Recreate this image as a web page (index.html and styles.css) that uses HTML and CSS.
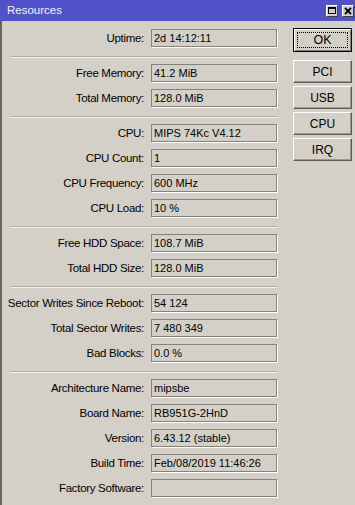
FILE: index.html
```html
<!DOCTYPE html>
<html>
<head>
<meta charset="utf-8">
<link rel="stylesheet" href="styles.css">
</head>
<body>
<div class="window">
  <div class="titlebar">
    <span class="title">Resources</span>
    <div class="tb-btns">
      <span class="tb-btn"><span class="max-icon"></span></span>
      <span class="tb-btn">
        <svg width="8" height="8" viewBox="0 0 8 8"><path d="M1 1 L7 7 M7 1 L1 7" stroke="#000" stroke-width="2" fill="none"/></svg>
      </span>
    </div>
  </div>
  <div class="content">
    <div class="form">
      <div class="row"><span class="lbl">Uptime:</span><span class="field">2d 14:12:11</span></div>
      <div class="sep"></div>
      <div class="row"><span class="lbl">Free Memory:</span><span class="field">41.2 MiB</span></div>
      <div class="row"><span class="lbl">Total Memory:</span><span class="field">128.0 MiB</span></div>
      <div class="sep"></div>
      <div class="row"><span class="lbl">CPU:</span><span class="field">MIPS 74Kc V4.12</span></div>
      <div class="row"><span class="lbl">CPU Count:</span><span class="field">1</span></div>
      <div class="row"><span class="lbl">CPU Frequency:</span><span class="field">600 MHz</span></div>
      <div class="row"><span class="lbl">CPU Load:</span><span class="field">10 %</span></div>
      <div class="sep"></div>
      <div class="row"><span class="lbl">Free HDD Space:</span><span class="field">108.7 MiB</span></div>
      <div class="row"><span class="lbl">Total HDD Size:</span><span class="field">128.0 MiB</span></div>
      <div class="sep"></div>
      <div class="row"><span class="lbl">Sector Writes Since Reboot:</span><span class="field">54 124</span></div>
      <div class="row"><span class="lbl">Total Sector Writes:</span><span class="field">7 480 349</span></div>
      <div class="row"><span class="lbl">Bad Blocks:</span><span class="field">0.0 %</span></div>
      <div class="sep"></div>
      <div class="row"><span class="lbl">Architecture Name:</span><span class="field">mipsbe</span></div>
      <div class="row"><span class="lbl">Board Name:</span><span class="field">RB951G-2HnD</span></div>
      <div class="row"><span class="lbl">Version:</span><span class="field">6.43.12 (stable)</span></div>
      <div class="row"><span class="lbl">Build Time:</span><span class="field">Feb/08/2019 11:46:26</span></div>
      <div class="row"><span class="lbl">Factory Software:</span><span class="field"></span></div>
    </div>
    <div class="buttons">
      <button class="btn btn-default"><span class="focus">OK</span></button>
      <div class="btn-group">
        <button class="btn">PCI</button>
        <button class="btn">USB</button>
        <button class="btn">CPU</button>
        <button class="btn">IRQ</button>
      </div>
    </div>
  </div>
</div>
</body>
</html>
```

FILE: styles.css
```css
html, body {
  margin: 0;
  padding: 0;
  background: #d4d0c8;
}

.window {
  width: 355px;
  height: 505px;
  background: #d4d0c8;
  font-family: "Liberation Sans", Arial, sans-serif;
  font-size: 11px;
  color: #000;
  overflow: hidden;
  display: flex;
  flex-direction: column;
}

.titlebar {
  height: 21px;
  background: #5151c9;
  display: flex;
  align-items: center;
  justify-content: space-between;
  padding: 0 1px 0 7px;
  flex: none;
}

.title {
  color: #f2f2fa;
  font-size: 11.5px;
  line-height: 21px;
}

.tb-btns {
  display: flex;
  gap: 4px;
}

.tb-btn {
  width: 12px;
  height: 12px;
  box-sizing: border-box;
  background: #d4d0c8;
  border: 1px solid;
  border-color: #fff #404040 #404040 #fff;
  display: flex;
  align-items: center;
  justify-content: center;
}

.max-icon {
  width: 8px;
  height: 7px;
  box-sizing: border-box;
  border: 1px solid #000;
  border-top-width: 2px;
}

.content {
  flex: 1;
  display: flex;
  border-left: 2px solid #6a6761;
}

.form {
  width: 275px;
  padding-top: 8px;
  display: flex;
  flex-direction: column;
}

.row {
  display: flex;
  align-items: center;
  height: 18px;
}

.row + .row {
  margin-top: 7px;
}

.lbl {
  width: 149px;
  padding-right: 7px;
  box-sizing: border-box;
  text-align: right;
  white-space: nowrap;
  font-size: 11.5px;
  letter-spacing: -0.3px;
  flex: none;
}

.field {
  width: 126px;
  height: 18px;
  box-sizing: border-box;
  border: 1px solid #858279;
  box-shadow: 1px 1px 0 #fff;
  padding-left: 2px;
  line-height: 16px;
  white-space: nowrap;
  flex: none;
}

.sep {
  margin: 9px 0 6px 8px;
  width: 267px;
  border-top: 1px solid #aeaaa3;
  border-bottom: 1px solid #f4f3f0;
}

.buttons {
  margin-left: 16px;
  padding-top: 7px;
  display: flex;
  flex-direction: column;
}

.btn {
  width: 59px;
  height: 23px;
  box-sizing: border-box;
  background: #d4d0c8;
  font-family: inherit;
  font-size: 12px;
  color: #000;
  padding: 0;
  margin: 0;
  border: 1px solid;
  border-color: #fff #5c5a56 #5c5a56 #fff;
  box-shadow: inset -1px -1px 0 #9c9890;
  display: flex;
  align-items: center;
  justify-content: center;
}

.btn-default {
  height: 24px;
  font-size: 12.5px;
  border: 1px solid #000;
  box-shadow: inset 1px 1px 0 #fff, inset -1px -1px 0 #808080;
  padding: 3px;
}

.focus {
  flex: 1;
  align-self: stretch;
  border: 1px dotted #000;
  display: flex;
  align-items: center;
  justify-content: center;
}

.btn-group {
  margin-top: 8px;
  display: flex;
  flex-direction: column;
  gap: 3px;
}
```
